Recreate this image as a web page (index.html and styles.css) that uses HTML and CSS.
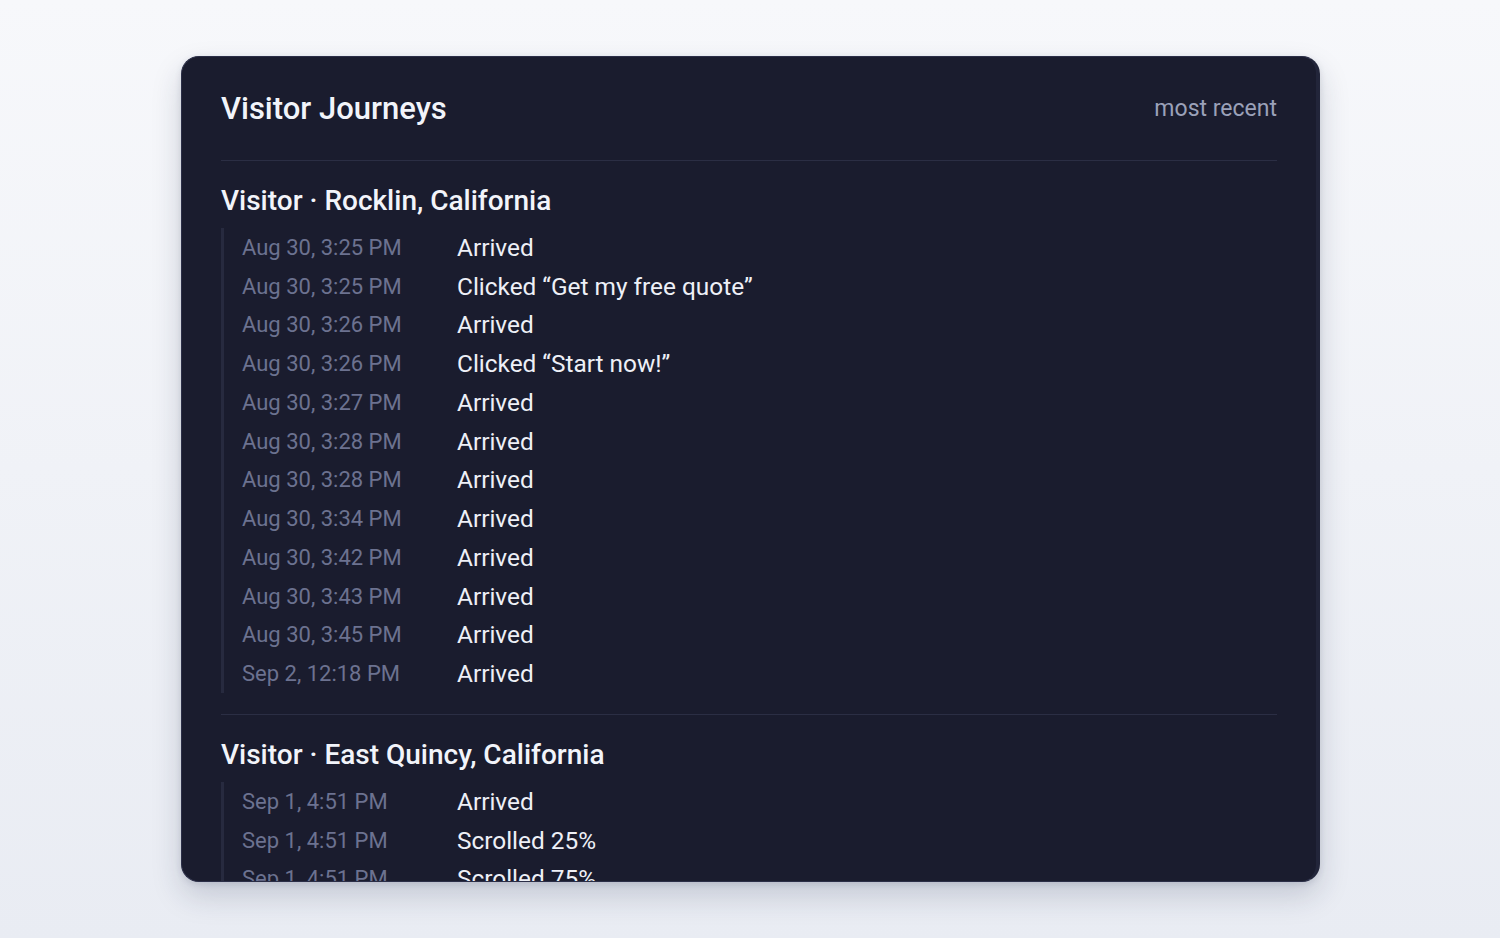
FILE: index.html
```html
<!DOCTYPE html>
<html lang="en">
<head>
<meta charset="utf-8">
<title>Visitor Journeys</title>
<link rel="stylesheet" href="styles.css">
</head>
<body>
<div class="card">
  <div class="scroll">
    <header class="card-head">
      <h1 class="title">Visitor Journeys</h1>
      <span class="sort">most recent</span>
    </header>
    <section class="visitor">
      <h2 class="visitor-name">Visitor · Rocklin, California</h2>
      <ul class="timeline">
        <li><span class="time">Aug 30, 3:25 PM</span><span class="event">Arrived</span></li>
        <li><span class="time">Aug 30, 3:25 PM</span><span class="event">Clicked “Get my free quote”</span></li>
        <li><span class="time">Aug 30, 3:26 PM</span><span class="event">Arrived</span></li>
        <li><span class="time">Aug 30, 3:26 PM</span><span class="event">Clicked “Start now!”</span></li>
        <li><span class="time">Aug 30, 3:27 PM</span><span class="event">Arrived</span></li>
        <li><span class="time">Aug 30, 3:28 PM</span><span class="event">Arrived</span></li>
        <li><span class="time">Aug 30, 3:28 PM</span><span class="event">Arrived</span></li>
        <li><span class="time">Aug 30, 3:34 PM</span><span class="event">Arrived</span></li>
        <li><span class="time">Aug 30, 3:42 PM</span><span class="event">Arrived</span></li>
        <li><span class="time">Aug 30, 3:43 PM</span><span class="event">Arrived</span></li>
        <li><span class="time">Aug 30, 3:45 PM</span><span class="event">Arrived</span></li>
        <li><span class="time">Sep 2, 12:18 PM</span><span class="event">Arrived</span></li>
      </ul>
    </section>
    <section class="visitor">
      <h2 class="visitor-name">Visitor · East Quincy, California</h2>
      <ul class="timeline">
        <li><span class="time">Sep 1, 4:51 PM</span><span class="event">Arrived</span></li>
        <li><span class="time">Sep 1, 4:51 PM</span><span class="event">Scrolled 25%</span></li>
        <li><span class="time">Sep 1, 4:51 PM</span><span class="event">Scrolled 75%</span></li>
      </ul>
    </section>
  </div>
</div>
</body>
</html>
```

FILE: styles.css
```css
html, body {
  margin: 0;
  padding: 0;
}
body {
  height: 938px;
  background: linear-gradient(180deg, #f7f8fb 0%, #e9ecf3 100%);
  font-family: Roboto, "Noto Sans", "Liberation Sans", sans-serif;
  padding-top: 56px;
  box-sizing: border-box;
}
.card {
  margin-left: 181px;
  width: 1139px;
  height: 826px;
  box-sizing: border-box;
  background: #1a1c2e;
  border: 1px solid #2b2e47;
  border-right: 4px solid #22253a;
  border-radius: 18px;
  overflow: hidden;
  box-shadow: 0 14px 30px rgba(30, 40, 70, 0.18), 0 2px 6px rgba(30, 40, 70, 0.12);
}
.scroll {
  padding: 0 39px 0 39px;
}
.card-head {
  display: flex;
  justify-content: space-between;
  align-items: center;
  height: 103px;
  border-bottom: 1px solid #2b2e44;
}
.title {
  margin: 0;
  font-size: 31px;
  font-weight: 500;
  color: #f2f4fa;
}
.sort {
  font-size: 23px;
  color: #9ba1b9;
}
.visitor {
  padding: 24px 0 21px;
  border-bottom: 1px solid #2b2e44;
}
.visitor-name {
  margin: 0 0 11px;
  font-size: 28px;
  font-weight: 500;
  color: #f2f4fa;
  line-height: 32px;
}
.timeline {
  list-style: none;
  margin: 0;
  padding: 0 0 0 18px;
  border-left: 3px solid #272a3f;
}
.timeline li {
  display: flex;
  height: 38.75px;
  align-items: center;
}
.time {
  width: 215px;
  flex: none;
  font-size: 22px;
  color: #6c7290;
}
.event {
  font-size: 24.4px;
  color: #eef0f7;
}
```
